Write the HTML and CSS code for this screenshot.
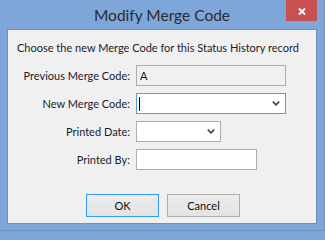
FILE: index.html
```html
<!DOCTYPE html>
<html>
<head>
<meta charset="utf-8">
<link rel="stylesheet" href="styles.css">
</head>
<body>
<div class="window">
  <div class="titlebar">
    <span class="title">Modify Merge Code</span>
    <div class="close">
      <svg width="8" height="7" viewBox="0 0 8 7"><path d="M1 0.5 L7 6.5 M7 0.5 L1 6.5" stroke="#fff" stroke-width="1.8" fill="none"/></svg>
    </div>
  </div>
  <div class="client">
    <div class="intro">Choose the new Merge Code for this Status History record</div>
    <div class="form">
      <label class="lbl">Previous Merge Code:</label>
      <div class="field readonly wide"><span class="val">A</span></div>
      <label class="lbl">New Merge Code:</label>
      <div class="field focus wide"><span class="caret"></span><span class="spacer"></span>
        <svg class="chev" width="8" height="5" viewBox="0 0 8 5"><path d="M0.8 0.6 L4 3.8 L7.2 0.6" stroke="#444" stroke-width="1.7" fill="none"/></svg>
      </div>
      <label class="lbl">Printed Date:</label>
      <div class="field date"><span class="spacer"></span>
        <svg class="chev" width="8" height="5" viewBox="0 0 8 5"><path d="M0.8 0.6 L4 3.8 L7.2 0.6" stroke="#444" stroke-width="1.7" fill="none"/></svg>
      </div>
      <label class="lbl">Printed By:</label>
      <div class="field by"></div>
    </div>
    <div class="buttons">
      <div class="btn default">OK</div>
      <div class="btn">Cancel</div>
    </div>
  </div>
</div>
</body>
</html>
```
FILE: styles.css
```css
html, body {
  margin: 0;
  padding: 0;
}
body {
  background: #7ea6d8;
  font-family: "Lato", "Noto Sans", sans-serif;
}
.window {
  position: relative;
  width: 325px;
  height: 231px;
  box-sizing: border-box;
  background: #7ea6d8;
  border-right: 1px solid #6f93c4;
  border-bottom: 1px solid #6f93c4;
  padding-left: 7px;
}
.titlebar {
  height: 29px;
  display: flex;
  align-items: center;
  justify-content: center;
  margin-left: -7px;
}
.title {
  font-size: 15.5px;
  color: #2c2c2c;
  margin-top: 0;
}
.close {
  position: absolute;
  top: 0;
  right: 7px;
  width: 31px;
  height: 21px;
  background: #c75050;
  display: flex;
  align-items: center;
  justify-content: center;
}
.close svg {
  margin-top: 1px;
}
.client {
  width: 308px;
  height: 193px;
  background: #f0f0f0;
  border: 1px solid #6d90bf;
  font-size: 11px;
  color: #1b1b2e;
}
.intro {
  padding-left: 9px;
  padding-top: 10px;
  height: 15px;
  line-height: 15px;
  white-space: nowrap;
}
.form {
  margin-top: 10px;
  display: grid;
  grid-template-columns: 122px auto;
  grid-auto-rows: 21px;
  column-gap: 6px;
  row-gap: 7px;
}
.lbl {
  text-align: right;
  line-height: 21px;
  white-space: nowrap;
}
.field {
  box-sizing: border-box;
  height: 21px;
  border: 1px solid #adadad;
  background: #fff;
  display: flex;
  align-items: center;
  padding: 0 5px 0 2px;
}
.wide { width: 150px; }
.date { width: 85px; }
.by { width: 121px; }
.readonly {
  background: #f0f0f0;
}
.val {
  line-height: 19px;
  color: #111;
  padding-left: 1px;
}
.focus {
  border-color: #569de5;
}
.caret {
  width: 1px;
  height: 14px;
  background: #000;
}
.spacer {
  flex: 1;
}
.chev {
  display: block;
}
.buttons {
  margin-top: 24px;
  padding-left: 78px;
  display: flex;
  gap: 8px;
}
.btn {
  box-sizing: border-box;
  width: 73px;
  height: 23px;
  border: 1px solid #adadad;
  background: linear-gradient(#ececec, #e3e3e3);
  display: flex;
  align-items: center;
  justify-content: center;
  color: #111;
}
.btn.default {
  border-color: #3399ff;
}
```
